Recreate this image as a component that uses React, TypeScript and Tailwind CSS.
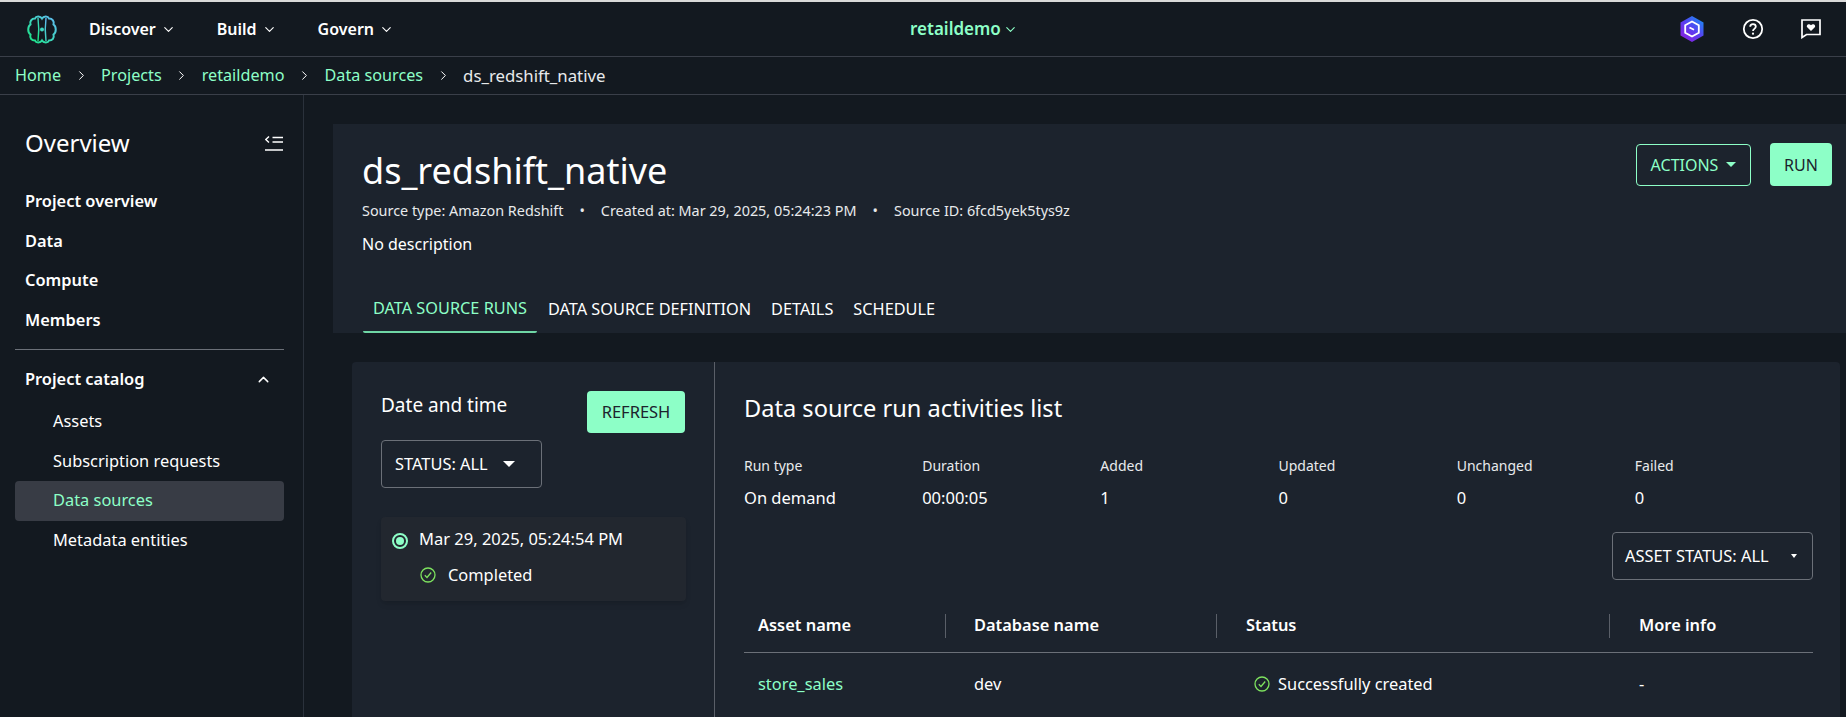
import { ChevronDown, ChevronRight, ChevronUp } from 'lucide-react'

const font = { fontFamily: '"Noto Sans", sans-serif' }

const topNav = ['Discover', 'Build', 'Govern']
const crumbs = ['Home', 'Projects', 'retaildemo', 'Data sources']
const projectLinks = ['Project overview', 'Data', 'Compute', 'Members']
const catalogLinks = ['Assets', 'Subscription requests', 'Data sources', 'Metadata entities']
const tabs = ['DATA SOURCE DEFINITION', 'DETAILS', 'SCHEDULE']
const stats = [
  { label: 'Run type', value: 'On demand' },
  { label: 'Duration', value: '00:00:05' },
  { label: 'Added', value: '1' },
  { label: 'Updated', value: '0' },
  { label: 'Unchanged', value: '0' },
  { label: 'Failed', value: '0' },
]

function BrainLogo() {
  return (
    <svg width="30" height="29" viewBox="0 0 30 29" fill="none">
      <defs>
        <linearGradient id="brain" x1="0" y1="1" x2="1" y2="0">
          <stop offset="0" stopColor="#16e67f" />
          <stop offset="0.5" stopColor="#3fd6c0" />
          <stop offset="1" stopColor="#62b8f5" />
        </linearGradient>
      </defs>
      <path
        d="M15 3.5C13.5 1 9 .8 8 3.5 4.500 3.500 2.500 6.500 3.500 9.500.5 11.500.5 17.500 3.500 19.500 2.500 23 4.500 25.500 8 25.500 9 28.200 13.500 28 15 25.500 16.500 28 21 28.200 22 25.500 25.500 25.500 27.500 23 26.500 19.500 29.500 17.500 29.500 11.500 26.500 9.500 27.500 6.500 25.500 3.500 22 3.500 21 .8 16.500 1 15 3.500Z"
        stroke="url(#brain)"
        strokeWidth="2"
      />
      <path d="M11 3C11.800 9 11.800 20 11 26M19 3C18.200 9 18.200 20 19 26" stroke="url(#brain)" strokeWidth="1.400" />
      <circle cx="15" cy="14.500" r="2" fill="#3fd6c0" />
    </svg>
  )
}

function HexBadge() {
  return (
    <svg width="26" height="28" viewBox="0 0 26 28" fill="none">
      <defs>
        <linearGradient id="hex" x1="1" y1="0" x2="0.2" y2="1">
          <stop offset="0" stopColor="#0f9bf5" />
          <stop offset="0.55" stopColor="#5a3df0" />
          <stop offset="1" stopColor="#8a1fe0" />
        </linearGradient>
      </defs>
      <path d="M13 1l11.500 6.500v13L13 27 1.500 20.500v-13Z" fill="url(#hex)" />
      <path d="M13 6.500l6.800 3.800v7.400L13 21.500l-6.800-3.800v-7.400Z" stroke="#fff" strokeWidth="1.800" />
      <path d="M10.500 12.500l4.500 2.300" stroke="#fff" strokeWidth="1.800" />
    </svg>
  )
}

function HelpIcon() {
  return (
    <svg width="22" height="22" viewBox="0 0 22 22" fill="none">
      <circle cx="11" cy="11" r="9.200" stroke="#fff" strokeWidth="1.800" />
      <path d="M8.200 8.800c0-1.700 1.200-2.700 2.800-2.700s2.800 1 2.800 2.500c0 2.300-2.800 2.200-2.800 4.300" stroke="#fff" strokeWidth="1.800" />
      <circle cx="11" cy="15.700" r="1.100" fill="#fff" />
    </svg>
  )
}

function FeedbackIcon() {
  return (
    <svg width="20" height="20" viewBox="0 0 20 20" fill="none">
      <path d="M1 1h18v14.500H5.500L1 18.500Z" stroke="#fff" strokeWidth="1.700" />
      <path d="M10 12L6.200 8.300c-1.500-2 1.800-4.300 3.800-2 2-2.300 5.300 0 3.800 2Z" fill="#fff" />
    </svg>
  )
}

function CollapseIcon() {
  return (
    <svg width="18" height="16" viewBox="0 0 18 16" fill="none" stroke="#fff" strokeWidth="1.400">
      <path d="M4 1.500L.8 4.500 4 7.500" />
      <path d="M7.500 2.500H18M7.500 7H18M0 15h18" />
    </svg>
  )
}

function CheckCircle() {
  return (
    <svg width="16" height="16" viewBox="0 0 16 16" fill="none" stroke="#7ee35f" strokeWidth="1.300">
      <circle cx="8" cy="8" r="7" />
      <path d="M4.800 8.200l2.200 2.300 4.200-5" />
    </svg>
  )
}

function Caret({ className }: { className: string }) {
  return <span className={`inline-block border-x-transparent ${className}`} />
}

export default function App() {
  return (
    <div style={font} className="h-[717px] w-[1846px] overflow-hidden bg-[#131920] text-white">
      <div className="h-[2px] bg-[#d9d9d9]" />

      {/* top bar */}
      <header className="flex h-[55px] items-center border-b border-[#3a3f49] pr-[25px]">
        <div className="flex w-[910px] items-center pl-[27px]">
          <BrainLogo />
          <nav className="ml-[32px] flex gap-[41px]">
            {topNav.map((item) => (
              <button key={item} className="flex items-center gap-[5px] text-[16px] font-semibold">
                {item}
                <ChevronDown size={15} strokeWidth={1.8} />
              </button>
            ))}
          </nav>
        </div>
        <button className="flex items-center gap-[2px] text-[17px] font-semibold text-[#8dffc7]">
          retaildemo
          <ChevronDown size={15} strokeWidth={1.8} />
        </button>
        <div className="ml-auto flex items-center gap-[37px]">
          <HexBadge />
          <HelpIcon />
          <FeedbackIcon />
        </div>
      </header>

      {/* breadcrumb */}
      <div className="flex h-[38px] items-center border-b border-[#3a3f49] pl-[15px] text-[16.200px]">
        {crumbs.map((crumb) => (
          <span key={crumb} className="flex items-center text-[#8dffc7]">
            {crumb}
            <ChevronRight size={15} strokeWidth={1.6} className="mx-[12.500px] text-white" />
          </span>
        ))}
        <span className="text-[16.800px] text-[#e8eaec]">ds_redshift_native</span>
      </div>

      <div className="flex">
        {/* sidebar */}
        <aside className="h-[622px] w-[304px] shrink-0 border-r border-[#2a313b] pl-[15px] pr-[19px]">
          <div className="flex items-center justify-between pl-[10px] pr-[1px] pt-[32px]">
            <h2 className="text-[24px] leading-[32px]">Overview</h2>
            <CollapseIcon />
          </div>
          <ul className="mt-[23px] pl-[10px] text-[16.400px] font-semibold">
            {projectLinks.map((link) => (
              <li key={link} className="flex h-[39.500px] items-center">
                {link}
              </li>
            ))}
          </ul>
          <div className="mt-[9px] border-t border-[#6b7078]" />
          <div className="mt-[9px] flex h-[40px] items-center justify-between pl-[10px] pr-[12px] text-[16.400px] font-semibold">
            Project catalog
            <ChevronUp size={17} strokeWidth={2} />
          </div>
          <ul className="mt-[3px] text-[16.400px]">
            {catalogLinks.map((link) => (
              <li
                key={link}
                className={`flex h-[39.500px] items-center rounded-[4px] pl-[38px] ${
                  link === 'Data sources' ? 'bg-[#383c45] text-[#8dffc7]' : ''
                }`}
              >
                {link}
              </li>
            ))}
          </ul>
        </aside>

        <main className="min-w-0 flex-1 pl-[29px] pt-[29px]">
          {/* data source header */}
          <section className="bg-[#1c232d]">
            <div className="flex items-start justify-between pl-[29px] pr-[14px] pt-[19px]">
              <div>
                <h1 className="mt-[6px] text-[36px] leading-[44px]">ds_redshift_native</h1>
                <p className="mt-[9px] flex text-[14.400px] leading-[18px] text-[#e8eaec]">
                  Source type: Amazon Redshift
                  <span className="mx-[16px]">•</span>
                  Created at: Mar 29, 2025, 05:24:23 PM
                  <span className="mx-[16px]">•</span>
                  Source ID: 6fcd5yek5tys9z
                </p>
                <p className="mt-[13px] text-[16px] leading-[22px]">No description</p>
              </div>
              <div className="flex items-center gap-[19px]">
                <button className="flex h-[42px] w-[115px] items-center justify-center gap-[8px] rounded-[4px] border border-[#8dffc7] text-[16px] text-[#8dffc7]">
                  ACTIONS
                  <Caret className="border-x-[5px] border-t-[5px] border-t-[#8dffc7]" />
                </button>
                <button className="h-[43px] w-[62px] rounded-[4px] bg-[#8dffc7] text-[16px] text-[#1c232d]">RUN</button>
              </div>
            </div>
            <div className="mt-[31px] flex pl-[30px] text-[16.300px]">
              <button className="h-[47px] w-[174px] rounded-b-[2px] border-b-[2px] border-[#6fd6a5] whitespace-nowrap text-[#8dffc7]">
                DATA SOURCE RUNS
              </button>
              <div className="ml-[11px] flex gap-[20px]">
                {tabs.map((tab) => (
                  <button key={tab} className="h-[47px]">
                    {tab}
                  </button>
                ))}
              </div>
            </div>
          </section>

          {/* runs */}
          <section className="ml-[19px] mr-[6px] mt-[29px] flex h-[400px] rounded-t-[4px] bg-[#1c232d]">
            <div className="w-[363px] shrink-0 border-r border-[#5a5f68] pl-[29px] pr-[29px] pt-[29px]">
              <div className="flex items-start justify-between">
                <h3 className="mt-[2px] text-[19px] leading-[24px]">Date and time</h3>
                <button className="h-[42px] w-[98px] rounded-[4px] bg-[#8dffc7] text-[16.500px] text-[#1c232d]">REFRESH</button>
              </div>
              <button className="mt-[7px] flex h-[48px] w-[161px] items-center gap-[15px] rounded-[4px] border border-[#6b7078] pl-[13px] text-[16.400px]">
                STATUS: ALL
                <Caret className="border-x-[6px] border-t-[6px] border-t-white" />
              </button>
              <div className="mt-[29px] h-[84px] w-[305px] rounded-[4px] bg-[#22272f] pl-[11px] pt-[10px] shadow-md">
                <div className="flex items-center gap-[11px] text-[16.500px] leading-[24px]">
                  <span className="mt-[3px] flex h-[16px] w-[16px] items-center justify-center rounded-full border-[2px] border-[#8dffc7]">
                    <span className="h-[8px] w-[8px] rounded-full bg-[#8dffc7]" />
                  </span>
                  Mar 29, 2025, 05:24:54 PM
                </div>
                <div className="ml-[28px] mt-[12px] flex items-center gap-[12px] text-[16.400px] leading-[24px]">
                  <CheckCircle />
                  Completed
                </div>
              </div>
            </div>

            <div className="min-w-0 flex-1 pl-[29px] pr-[27px] pt-[31px]">
              <h3 className="text-[23.600px] leading-[30px]">Data source run activities list</h3>
              <div className="mt-[34px] grid grid-cols-6">
                {stats.map((stat) => (
                  <div key={stat.label} className="w-[178px]">
                    <div className="text-[14px] leading-[18px] text-[#e8eaec]">{stat.label}</div>
                    <div className="mt-[11px] text-[16.500px] leading-[24px]">{stat.value}</div>
                  </div>
                ))}
              </div>
              <div className="mt-[22px] flex justify-end">
                <button className="flex h-[48px] w-[201px] items-center justify-between rounded-[4px] border border-[#6b7078] pl-[12px] pr-[15px] text-[16.400px]">
                  ASSET STATUS: ALL
                  <Caret className="border-x-[3.500px] border-t-[4px] border-t-white" />
                </button>
              </div>
              <table className="mt-[18px] w-full table-fixed text-left text-[16.400px]">
                <thead>
                  <tr className="h-[54px] border-b border-[#6b7078]">
                    <th className="w-[201px] pt-[2px] pl-[14px] font-semibold">Asset name</th>
                    <th className="w-[271px] pt-[2px] font-semibold">
                      <div className="flex h-[24px] items-center border-l border-[#5a5f68] pl-[28px]">Database name</div>
                    </th>
                    <th className="w-[393px] pt-[2px] font-semibold">
                      <div className="flex h-[24px] items-center border-l border-[#5a5f68] pl-[29px]">Status</div>
                    </th>
                    <th className="pt-[2px] font-semibold">
                      <div className="flex h-[24px] items-center border-l border-[#5a5f68] pl-[29px]">More info</div>
                    </th>
                  </tr>
                </thead>
                <tbody>
                  <tr className="h-[64px]">
                    <td className="pl-[14px] text-[#8dffc7]">store_sales</td>
                    <td className="pl-[29px]">dev</td>
                    <td className="pl-[38px]">
                      <span className="flex items-center gap-[8px]">
                        <CheckCircle />
                        Successfully created
                      </span>
                    </td>
                    <td className="pl-[30px]">-</td>
                  </tr>
                </tbody>
              </table>
            </div>
          </section>
        </main>
      </div>
    </div>
  )
}
